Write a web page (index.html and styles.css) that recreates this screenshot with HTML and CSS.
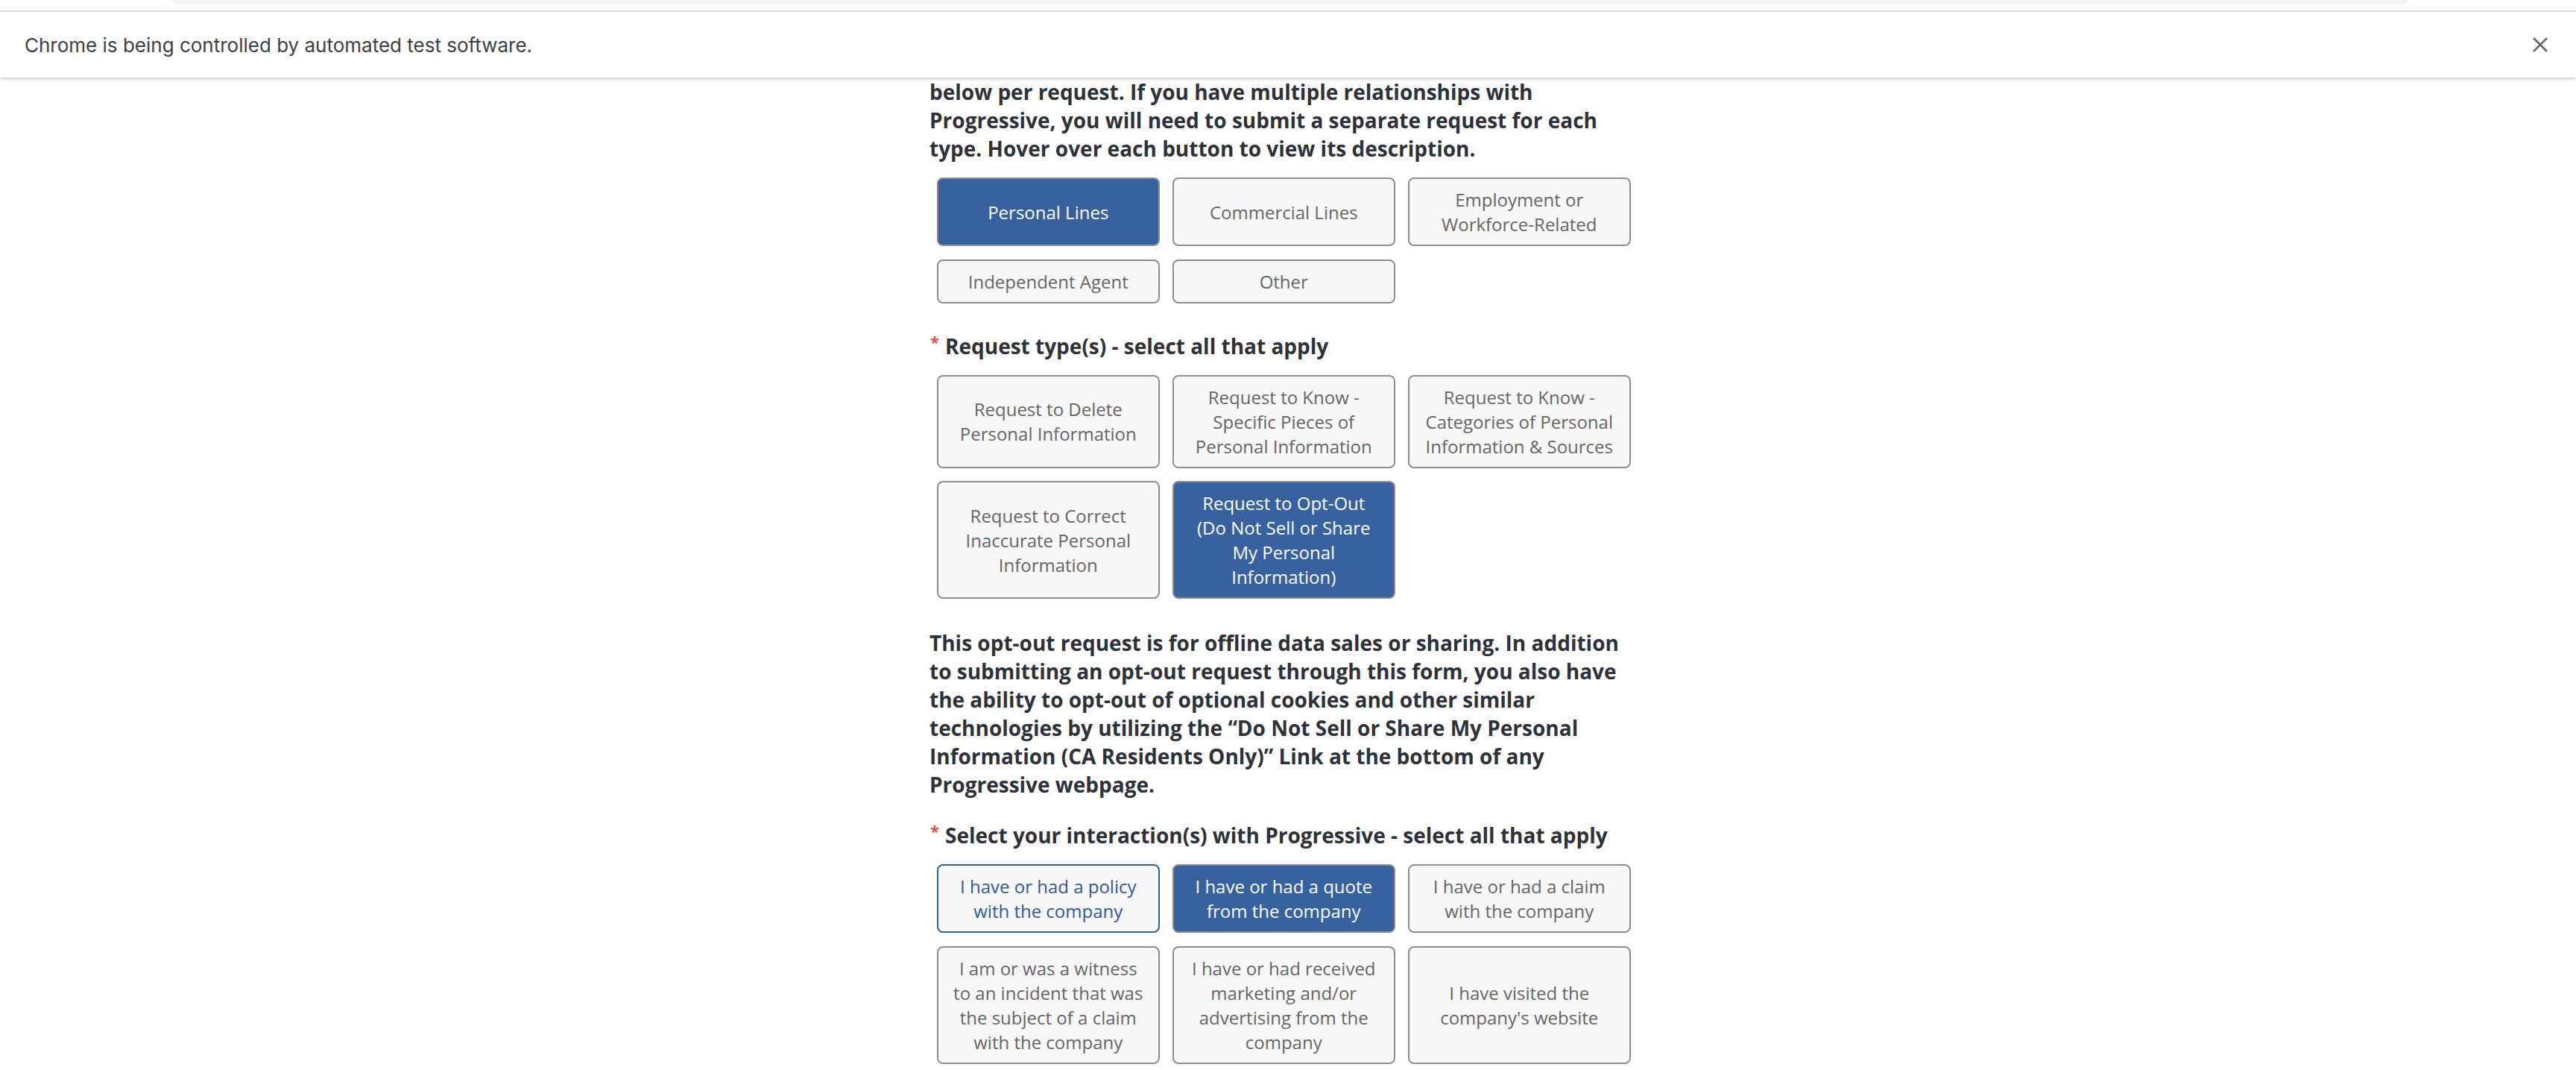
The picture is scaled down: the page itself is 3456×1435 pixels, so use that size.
FILE: index.html
```html
<!DOCTYPE html>
<html lang="en">
<head>
<meta charset="utf-8">
<title>Privacy Request</title>
<link rel="stylesheet" href="styles.css">
</head>
<body>
<div class="chrome-top"><div class="omnibox"></div></div>
<div class="infobar">
  <span class="infobar-text">Chrome is being controlled by automated test software.</span>
  <svg class="close" width="20" height="20" viewBox="0 0 20 20" aria-hidden="true"><path d="M2 2 L18 18 M18 2 L2 18" stroke="#5f6368" stroke-width="2.6" stroke-linecap="square"/></svg>
</div>
<main class="form">
  <p class="lead">below per request. If you have multiple relationships with Progressive, you will need to submit a separate request for each type. Hover over each button to view its description.</p>
  <div class="choices first">
    <div class="opt on">Personal Lines</div>
    <div class="opt">Commercial Lines</div>
    <div class="opt">Employment or Workforce-Related</div>
    <div class="opt">Independent Agent</div>
    <div class="opt">Other</div>
  </div>

  <div class="label"><span class="req">*</span>Request type(s) - select all that apply</div>
  <div class="choices">
    <div class="opt">Request to Delete Personal Information</div>
    <div class="opt">Request to Know - Specific Pieces of Personal Information</div>
    <div class="opt">Request to Know - Categories of Personal Information &amp; Sources</div>
    <div class="opt">Request to Correct Inaccurate Personal Information</div>
    <div class="opt on">Request to Opt-Out (Do Not Sell or Share My Personal Information)</div>
  </div>

  <p class="lead note">This opt-out request is for offline data sales or sharing. In addition to submitting an opt-out request through this form, you also have the ability to opt-out of optional cookies and other similar technologies by utilizing the “Do Not Sell or Share My Personal Information (CA Residents Only)” Link at the bottom of any Progressive webpage.</p>

  <div class="label second"><span class="req">*</span>Select your interaction(s) with Progressive - select all that apply</div>
  <div class="choices">
    <div class="opt focus">I have or had a policy with the company</div>
    <div class="opt on">I have or had a quote from the company</div>
    <div class="opt">I have or had a claim with the company</div>
    <div class="opt">I am or was a witness to an incident that was the subject of a claim with the company</div>
    <div class="opt">I have or had received marketing and/or advertising from the company</div>
    <div class="opt">I have visited the company's website</div>
  </div>
</main>
</body>
</html>
```

FILE: styles.css
```css
html, body {
  margin: 0;
  padding: 0;
  background: #ffffff;
}

body {
  font-family: "Open Sans", "Liberation Sans", sans-serif;
  height: 1435px;
  overflow: hidden;
}

.chrome-top {
  height: 14px;
  border-bottom: 2px solid #dedfe1;
  background: #ffffff;
  position: relative;
}

.omnibox {
  margin-left: 231px;
  width: 2998px;
  height: 6px;
  background: #f1f3f4;
  border-radius: 0 0 14px 14px;
}

.infobar {
  position: relative;
  z-index: 2;
  height: 88px;
  background: #ffffff;
  display: flex;
  align-items: center;
  justify-content: space-between;
  padding: 0 38px 0 33px;
  box-shadow: 0 2px 4px rgba(0, 0, 0, 0.22);
}

.infobar-text {
  font-family: Inter, Roboto, "Liberation Sans", sans-serif;
  font-size: 26px;
  color: #3c4043;
}

.close {
  display: block;
}

.form {
  width: 962px;
  margin: 0 auto;
}

.lead {
  margin: 0;
  max-width: 940px;
  font-size: 28px;
  line-height: 38px;
  font-weight: 700;
  color: #2c313a;
}

.note {
  margin-top: 40px;
}

.choices {
  display: grid;
  grid-template-columns: repeat(3, 298.5px);
  gap: 17.5px;
  margin: 20px 0 0 10px;
}

.choices.first {
  margin-top: 20px;
}

.opt {
  display: flex;
  align-items: center;
  justify-content: center;
  text-align: center;
  box-sizing: border-box;
  padding: 11px 16px;
  border: 2px solid #8e8e8e;
  border-radius: 8px;
  background: #f7f7f7;
  color: #666666;
  font-size: 24px;
  line-height: 33px;
}

.opt.on {
  background: #38619f;
  color: #ffffff;
}

.opt.focus {
  border-color: #38619f;
  color: #2f5aa0;
}

.label {
  margin-top: 38px;
  font-size: 28px;
  line-height: 38px;
  font-weight: 700;
  color: #2c313a;
  display: flex;
  align-items: flex-start;
}

.label.second {
  margin-top: 30px;
}

.req {
  color: #d9534f;
  font-size: 22px;
  line-height: 22px;
  margin: 2px 8px 0 1px;
}
```
